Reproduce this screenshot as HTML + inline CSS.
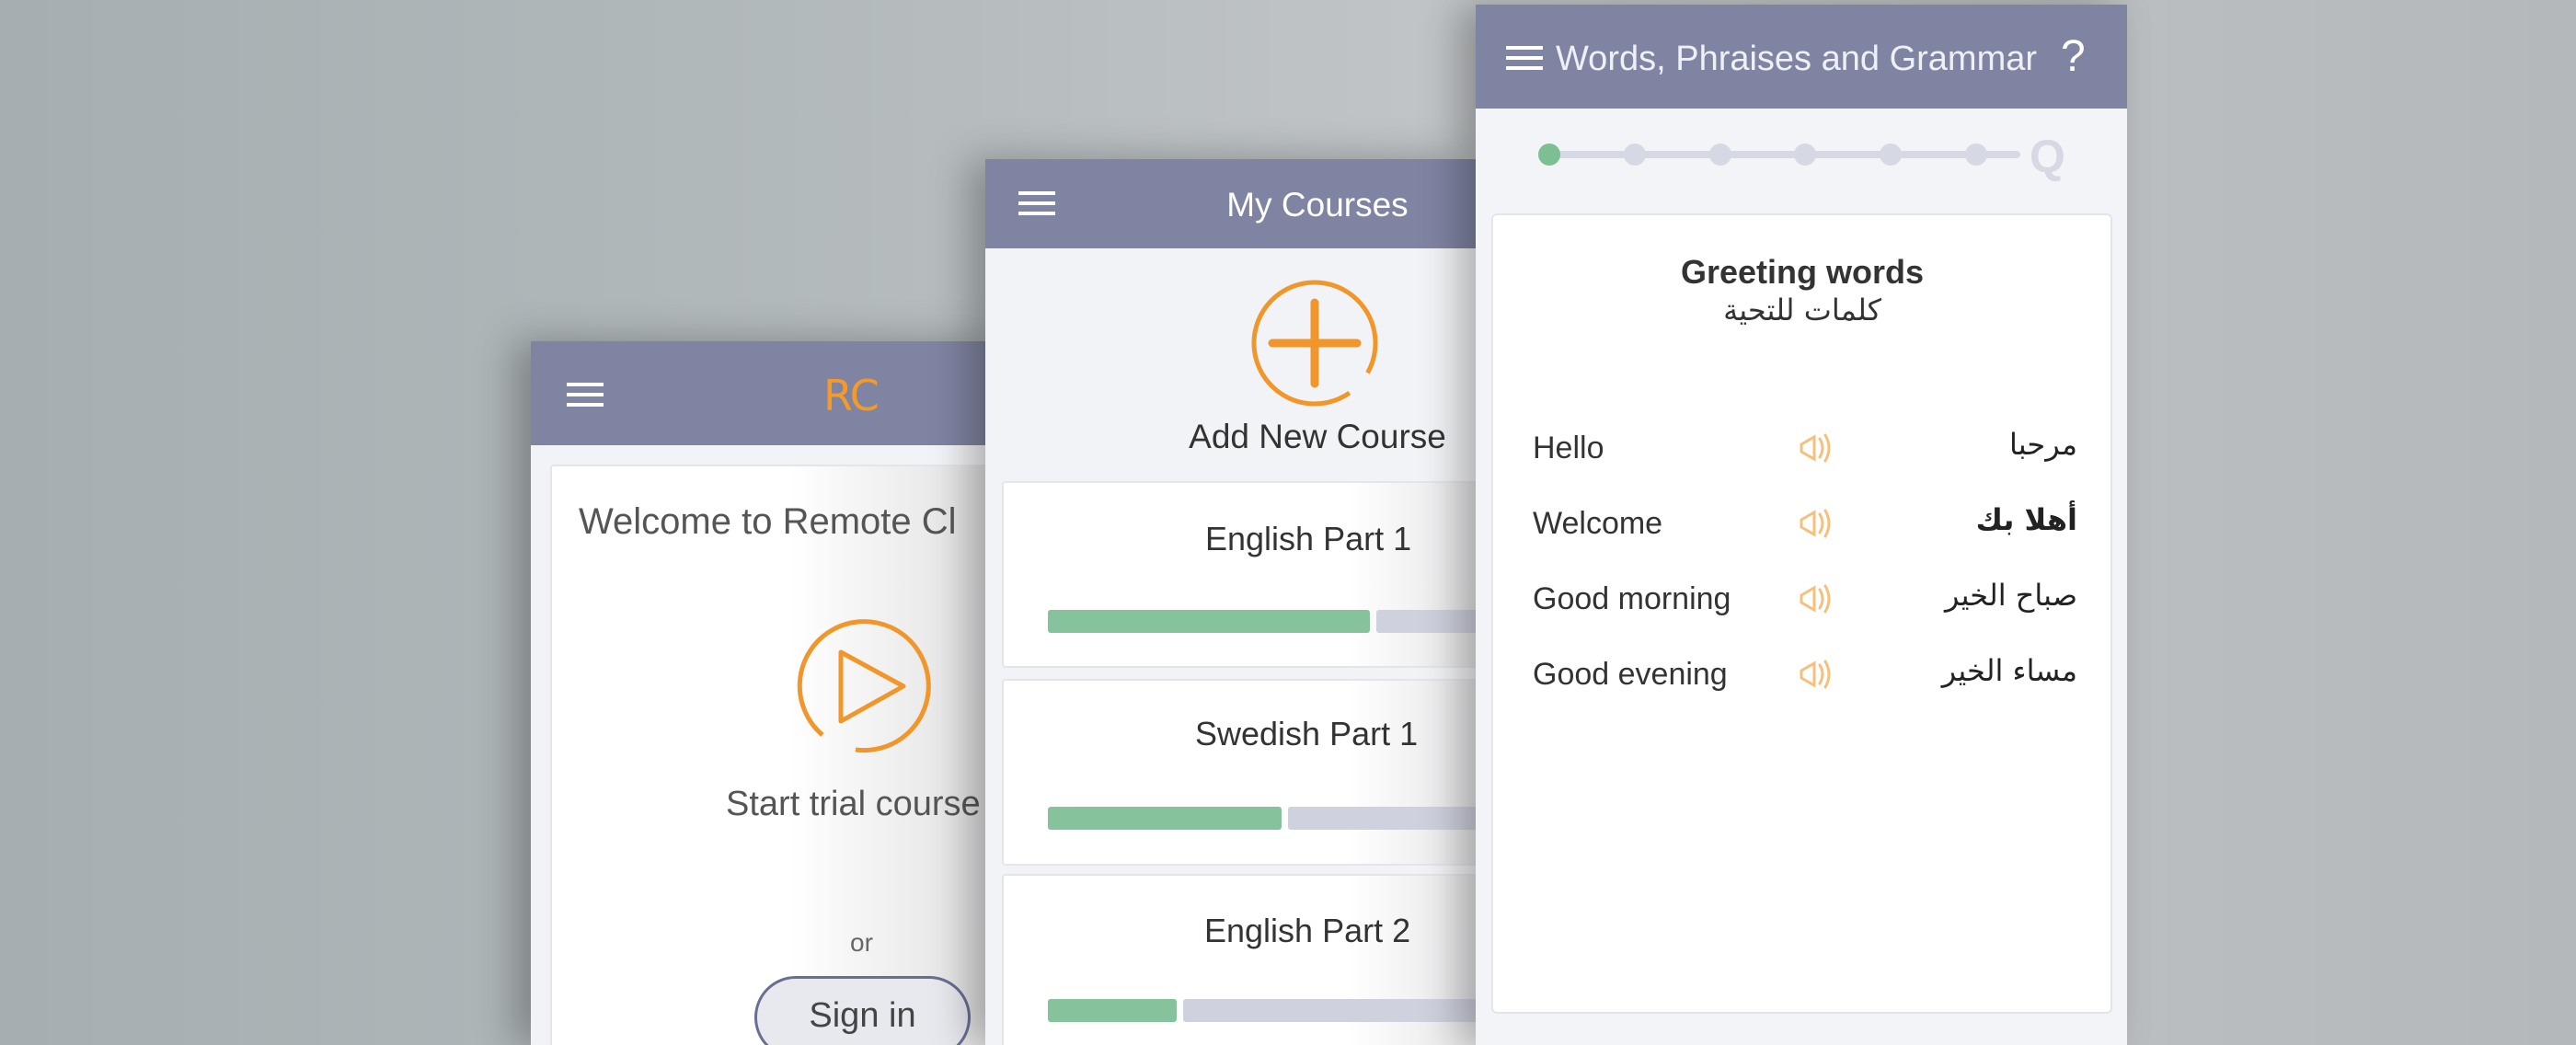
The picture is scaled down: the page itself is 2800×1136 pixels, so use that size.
<!DOCTYPE html>
<html style="width:2800px;height:1136px;overflow:hidden"><head><meta charset="utf-8"><style>
*{margin:0;padding:0;box-sizing:border-box}
body{width:2800px;height:1136px;overflow:hidden;position:relative;font-family:"Liberation Sans","Noto Sans CJK SC","DejaVu Sans",sans-serif;
background:linear-gradient(90deg,#a5aeb1 0%,#b2b9bb 30%,#c3c6c8 60%,#b9bdbf 85%,#b4b8ba 100%)}
.abs{position:absolute}
.phone{position:absolute;background:#f2f3f6;box-shadow:-18px 0 40px rgba(0,0,0,.28);overflow:hidden}
.hdr{position:absolute;left:0;top:0;right:0;background:#7f84a2}
.ham{position:absolute;width:40px;height:26px;border-top:4px solid #fff;border-bottom:4px solid #fff}
.ham:after{content:"";position:absolute;left:0;right:0;top:7px;height:4px;background:#fff}
.t{position:absolute;white-space:nowrap;line-height:1}
.card{position:absolute;background:#fff;border:2px solid #e4e5ea;border-radius:4px}
.bar{position:absolute;height:25px;border-radius:3px}
.g{background:#86c29c}.gr{background:#cfd1de}
.ar{font-family:'DejaVu Sans',sans-serif;font-size:32px;color:#222}
</style></head><body>

<!-- Phone 1 -->
<div class="phone" style="left:577px;top:371px;width:520px;height:765px">
  <div class="hdr" style="height:113px"></div>
  <div class="ham" style="left:39px;top:45px"></div>
  <div class="t" style="left:318px;top:36px;font-size:46px;color:#f39a2b;letter-spacing:-1px;font-family:'DejaVu Sans',sans-serif">RC</div>
  <div class="card" style="left:21px;top:134px;width:520px;height:700px;background:linear-gradient(90deg,#fff 0%,#fff 50%,#dcdcde 100%)"></div>
  <div class="t" style="left:52px;top:176px;font-size:40px;color:#555">Welcome to Remote Cl</div>
  <svg class="abs" style="left:283px;top:298px" width="154" height="154" viewBox="0 0 154 154">
    <path d="M34 130 A70 70 0 1 1 70 146" fill="none" stroke="#f0962a" stroke-width="5"/>
    <path d="M54 40 L54 115 L122 77 Z" fill="none" stroke="#f0962a" stroke-width="5" stroke-linejoin="round"/>
  </svg>
  <div class="t" style="left:212px;top:484px;font-size:38px;color:#555">Start trial course</div>
  <div class="t" style="left:347px;top:640px;font-size:28px;color:#666">or</div>
  <div class="abs" style="left:243px;top:690px;width:235px;height:90px;border:3px solid #6a6f92;border-radius:45px;background:#e8e9ee"></div>
  <div class="t" style="left:243px;width:235px;text-align:center;top:714px;font-size:38px;color:#444">Sign in</div>
</div>

<!-- Phone 2 -->
<div class="phone" style="left:1071px;top:173px;width:533px;height:963px">
  <div class="hdr" style="height:97px"></div>
  <div class="ham" style="left:36px;top:35px"></div>
  <div class="t" style="left:0;width:722px;text-align:center;top:31px;font-size:37px;color:#fff">My Courses</div>
  <svg class="abs" style="left:286px;top:128px" width="144" height="144" viewBox="0 0 144 144">
    <circle cx="72" cy="72" r="66" fill="none" stroke="#f0962a" stroke-width="5" stroke-dasharray="385 30" transform="rotate(55 72 72)"/>
    <path d="M72 28 V116 M26 72 H118" stroke="#f0962a" stroke-width="9" stroke-linecap="round"/>
  </svg>
  <div class="t" style="left:0;width:722px;text-align:center;top:283px;font-size:37px;color:#333">Add New Course</div>
  <div class="card" style="left:18px;top:350px;width:540px;height:203px;background:linear-gradient(90deg,#fff 70%,#e2e2e4 100%)"></div>
  <div class="t" style="left:239px;top:395px;font-size:36px;color:#333">English Part 1</div>
  <div class="bar g" style="left:68px;top:490px;width:350px"></div>
  <div class="bar gr" style="left:425px;top:490px;width:120px"></div>
  <div class="card" style="left:18px;top:565px;width:540px;height:203px;background:linear-gradient(90deg,#fff 70%,#e2e2e4 100%)"></div>
  <div class="t" style="left:228px;top:607px;font-size:36px;color:#333">Swedish Part 1</div>
  <div class="bar g" style="left:68px;top:704px;width:254px"></div>
  <div class="bar gr" style="left:329px;top:704px;width:220px"></div>
  <div class="card" style="left:18px;top:777px;width:540px;height:260px;background:linear-gradient(90deg,#fff 70%,#e2e2e4 100%)"></div>
  <div class="t" style="left:238px;top:821px;font-size:36px;color:#333">English Part 2</div>
  <div class="bar g" style="left:68px;top:913px;width:140px"></div>
  <div class="bar gr" style="left:215px;top:913px;width:330px"></div>
</div>

<!-- Phone 3 -->
<div class="phone" style="left:1604px;top:5px;width:708px;height:1131px;background:#f3f4f7">
  <div class="hdr" style="height:113px"></div>
  <div class="ham" style="left:33px;top:45px"></div>
  <div class="t" style="left:87px;top:40px;font-size:38px;color:#eef0f6">Words, Phraises and Grammar</div>
  <div class="t" style="left:636px;top:33px;font-size:48px;color:#fff">?</div>
  <div class="abs" style="left:80px;top:159px;width:512px;height:8px;background:#d6d8e4;border-radius:4px"></div>
  <div class="abs" style="left:68px;top:151px;width:24px;height:24px;border-radius:50%;background:#7bbf93"></div>
  <div class="abs" style="left:161px;top:151px;width:24px;height:24px;border-radius:50%;background:#d6d8e4"></div>
  <div class="abs" style="left:254px;top:151px;width:24px;height:24px;border-radius:50%;background:#d6d8e4"></div>
  <div class="abs" style="left:346px;top:151px;width:24px;height:24px;border-radius:50%;background:#d6d8e4"></div>
  <div class="abs" style="left:439px;top:151px;width:24px;height:24px;border-radius:50%;background:#d6d8e4"></div>
  <div class="abs" style="left:532px;top:151px;width:24px;height:24px;border-radius:50%;background:#d6d8e4"></div>
  <div class="t" style="left:602px;top:140px;font-size:50px;font-weight:bold;color:#d6d8e4">Q</div>
  <div class="card" style="left:17px;top:227px;width:675px;height:870px;border-radius:6px"></div>
  <div class="t" style="left:0;width:710px;text-align:center;top:273px;font-size:36px;font-weight:bold;color:#333">Greeting words</div>
  <div class="t ar" style="left:0;width:710px;text-align:center;top:316px;color:#333">كلمات للتحية</div>

  <div class="t" style="left:62px;top:465px;font-size:34px;color:#333">Hello</div>
  <div class="t" style="left:62px;top:547px;font-size:34px;color:#333">Welcome</div>
  <div class="t" style="left:62px;top:629px;font-size:34px;color:#333">Good morning</div>
  <div class="t" style="left:62px;top:711px;font-size:34px;color:#333">Good evening</div>

  <div class="t ar" style="right:54px;top:462px" dir="rtl">مرحبا</div>
  <div class="t ar" style="right:54px;top:544px;font-weight:bold" dir="rtl">أهلا بك</div>
  <div class="t ar" style="right:54px;top:626px" dir="rtl">صباح الخير</div>
  <div class="t ar" style="right:54px;top:708px" dir="rtl">مساء الخير</div>

  <svg class="abs" style="left:350px;top:460px" width="44" height="44" viewBox="0 0 44 44"><g fill="none" stroke="#f6c07c" stroke-width="3" stroke-linecap="round"><path d="M4 18 L18 10 V34 L4 26 Z"/><path d="M24 12 Q30 22 24 32"/><path d="M30 8 Q38 22 30 36"/></g></svg>
  <svg class="abs" style="left:350px;top:542px" width="44" height="44" viewBox="0 0 44 44"><g fill="none" stroke="#f6c07c" stroke-width="3" stroke-linecap="round"><path d="M4 18 L18 10 V34 L4 26 Z"/><path d="M24 12 Q30 22 24 32"/><path d="M30 8 Q38 22 30 36"/></g></svg>
  <svg class="abs" style="left:350px;top:624px" width="44" height="44" viewBox="0 0 44 44"><g fill="none" stroke="#f6c07c" stroke-width="3" stroke-linecap="round"><path d="M4 18 L18 10 V34 L4 26 Z"/><path d="M24 12 Q30 22 24 32"/><path d="M30 8 Q38 22 30 36"/></g></svg>
  <svg class="abs" style="left:350px;top:706px" width="44" height="44" viewBox="0 0 44 44"><g fill="none" stroke="#f6c07c" stroke-width="3" stroke-linecap="round"><path d="M4 18 L18 10 V34 L4 26 Z"/><path d="M24 12 Q30 22 24 32"/><path d="M30 8 Q38 22 30 36"/></g></svg>
</div>
</body></html>
